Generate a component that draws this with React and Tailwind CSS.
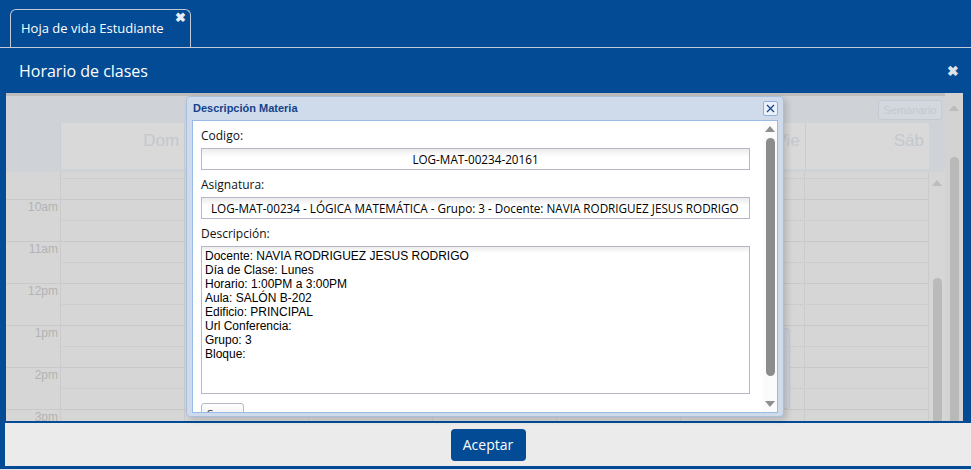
import React from 'react'

const days = ['Dom', 'Lun', 'Mar', 'Mié', 'Jue', 'Vie', 'Sáb']
const hours = ['9am', '10am', '11am', '12pm', '1pm', '2pm', '3pm']

const descripcion = [
  'Docente: NAVIA RODRIGUEZ JESUS RODRIGO',
  'Día de Clase: Lunes',
  'Horario: 1:00PM a 3:00PM',
  'Aula: SALÓN B-202',
  'Edificio: PRINCIPAL',
  'Url Conferencia:',
  'Grupo: 3',
  'Bloque:',
]

function TimeRows() {
  return (
    <div className="-mt-[15px]">
      {hours.map((h, i) => (
        <React.Fragment key={h}>
          <div className="flex h-[21px]">
            <div className="w-[54px] border-t border-[#c9c9c9] text-right pr-[2px] text-[12px] leading-[15px] text-[#b3b3b3] font-['Liberation_Sans',sans-serif]">
              {i === 0 ? '' : h}
            </div>
            <div className="w-[869px] border-t border-[#c9c9c9]" />
          </div>
          <div className="flex h-[21px]">
            <div className="w-[54px]" />
            <div className="w-[869px] border-t border-dotted border-[#c4c4c4]" />
          </div>
        </React.Fragment>
      ))}
    </div>
  )
}

function Calendar() {
  return (
    <div className="flex-1 flex flex-col bg-[#cfd2d6] border-t-[3px] border-[#bdbdbd]">
      {/* toolbar */}
      <div className="h-[27px] flex justify-end items-start pr-[3px] pt-[4px]">
        <div className="w-[64px] h-[20px] rounded-[3px] border border-[#c3cad3] bg-[#d3d8de] text-[11px] leading-[18px] text-center text-[#c2c8cf] font-['Liberation_Sans',sans-serif]">
          Semanario
        </div>
      </div>
      {/* day headers */}
      <div className="flex h-[49px]">
        <div className="w-[54px]" />
        <div className="w-[869px] h-[46px] grid grid-cols-7 bg-[#d9d9d9]">
          {days.map((d) => (
            <div key={d} className="border-l border-[#c8cdd4] text-right pr-[5px] pt-[8px] text-[17px] leading-[20px] text-[#c3c8cf] font-['Liberation_Sans',sans-serif]">
              {d}
            </div>
          ))}
        </div>
      </div>
      {/* body */}
      <div className="flex-1 flex bg-[#d6d6d6] overflow-hidden">
        <div className="relative w-[923px] overflow-hidden">
          <TimeRows />
          <div className="absolute top-0 bottom-0 left-[54px] w-[869px] grid grid-cols-7 border-r border-[#cbcbcb]">
            {days.map((d, i) => (
              <div key={d} className="relative border-l border-[#cbcbcb]">
                {i === 5 && (
                  <div className="absolute left-[2px] right-[14px] top-[156px] h-[81px] rounded-[3px] bg-[#cfd1d9] border border-[#c6c9d3]" />
                )}
              </div>
            ))}
          </div>
        </div>
        {/* inner scrollbar */}
        <div className="w-[16px] flex flex-col items-center pt-[8px]">
          <div className="w-0 h-0 border-l-[5px] border-r-[5px] border-b-[6px] border-l-transparent border-r-transparent border-b-[#bcbcbc]" />
          <div className="mt-[92px] w-[9px] flex-1 rounded-t-full bg-[#bababa]" />
        </div>
      </div>
    </div>
  )
}

function Field({ label, children, className }) {
  return (
    <div className={className}>
      <div className="text-[12px] leading-[16px] text-[#111] mb-[4px]">{label}</div>
      {children}
    </div>
  )
}

function Modal() {
  return (
    <div className="absolute left-[186px] top-[3px] w-[598px] h-[321px] rounded-[4px] border border-[#a9c0dc] bg-[#cfdbea] shadow-[3px_3px_6px_rgba(0,0,0,0.15)] flex flex-col px-[5px] pb-[3px]">
      <div className="h-[23px] flex items-center justify-between pl-[1px] pr-[0px]">
        <span className="text-[11px] font-bold text-[#15428b] font-['Liberation_Sans',sans-serif]">Descripción Materia</span>
        <div className="w-[15px] h-[15px] rounded-[2px] border border-[#8fb0d8] bg-[#eaf1fa] flex items-center justify-center">
          <svg width="9" height="9" viewBox="0 0 9 9">
            <path d="M1 1L8 8M8 1L1 8" stroke="#15428b" strokeWidth="1.2" />
          </svg>
        </div>
      </div>
      <div className="flex-1 flex bg-white border border-[#99bbe8] overflow-hidden font-['Open_Sans',sans-serif]">
        <div className="flex-1 pl-[8px] pr-[13px] pt-[7px]">
          <Field label="Codigo:">
            <div className="h-[22px] border border-[#b5b8c8] bg-[linear-gradient(#ececec,#fff_8px)] text-center text-[11.7px] leading-[20px] text-black">
              LOG-MAT-00234-20161
            </div>
          </Field>
          <Field label="Asignatura:" className="mt-[7px]">
            <div className="h-[22px] border border-[#b5b8c8] bg-[linear-gradient(#ececec,#fff_8px)] pl-[9px] text-[11.7px] leading-[20px] text-black whitespace-nowrap overflow-hidden">
              LOG-MAT-00234 - LÓGICA MATEMÁTICA - Grupo: 3 - Docente: NAVIA RODRIGUEZ JESUS RODRIGO
            </div>
          </Field>
          <Field label="Descripción:" className="mt-[7px]">
            <div className="h-[148px] border border-[#b5b8c8] bg-[linear-gradient(#ececec,#fff_6px)] pl-[3px] pt-[2px] text-[12px] leading-[14px] text-black font-['Liberation_Sans',sans-serif]">
              {descripcion.map((l) => (
                <div key={l}>{l}</div>
              ))}
            </div>
          </Field>
          <div className="mt-[9px] w-[43px] h-[22px] rounded-[3px] border border-[#b5b8c8] bg-[linear-gradient(#fff,#e6e6e6)] pt-[3px] text-[11px] leading-[14px] text-center text-[#333]">
            Cerrar
          </div>
        </div>
        {/* modal scrollbar */}
        <div className="w-[14px] flex flex-col items-center pt-[5px] pb-[5px] bg-[#fbfbfb]">
          <div className="w-0 h-0 border-l-[5px] border-r-[5px] border-b-[6px] border-l-transparent border-r-transparent border-b-[#8f8f8f]" />
          <div className="mt-[6px] w-[9px] h-[238px] rounded-full bg-[#8c8c8c]" />
          <div className="mt-auto w-0 h-0 border-l-[5px] border-r-[5px] border-t-[6px] border-l-transparent border-r-transparent border-t-[#8f8f8f]" />
        </div>
      </div>
    </div>
  )
}

export default function App() {
  return (
    <div className="w-[971px] h-[470px] bg-[#034b94] flex flex-col overflow-hidden font-['Open_Sans',sans-serif]">
      {/* tabs */}
      <div className="h-[47px] px-[10px] pt-[9px] flex items-end">
        <div className="relative w-[181px] h-[38px] rounded-t-[6px] border border-b-0 border-[#c2cad6] pl-[10px] flex items-center text-white text-[13px]">
          Hoja de vida Estudiante
          <span className="absolute right-[4px] top-[1px] text-[13px] leading-[13px] font-bold text-[#e8eef6]">✖</span>
        </div>
      </div>
      <div className="h-px bg-[#c3cbd6]" />
      {/* window header */}
      <div className="h-[45px] flex items-center justify-between pl-[19px] pr-[12px]">
        <span className="text-white text-[16px]">Horario de clases</span>
        <span className="text-[#dde3ec] text-[14px] font-bold">✖</span>
      </div>
      {/* content */}
      <div className="relative h-[328px] flex pl-[6px] pr-[8px]">
        <Calendar />
        <div className="w-[18px] bg-[#d3d3d3] flex flex-col items-center pt-[12px]">
          <div className="w-0 h-0 border-l-[5px] border-r-[5px] border-b-[6px] border-l-transparent border-r-transparent border-b-[#bcbcbc]" />
          <div className="mt-[46px] w-[9px] flex-1 rounded-t-full bg-[#b9b9b9]" />
        </div>
        <Modal />
      </div>
      {/* footer */}
      <div className="mt-[2px] ml-[5px] h-[43px] bg-[#ebebeb] flex items-center justify-center">
        <button className="w-[75px] h-[32px] rounded-[4px] bg-[#034b94] text-white text-[14px]">Aceptar</button>
      </div>
      <div className="mt-[3px] h-px bg-[#dfe4ea]" />
    </div>
  )
}
